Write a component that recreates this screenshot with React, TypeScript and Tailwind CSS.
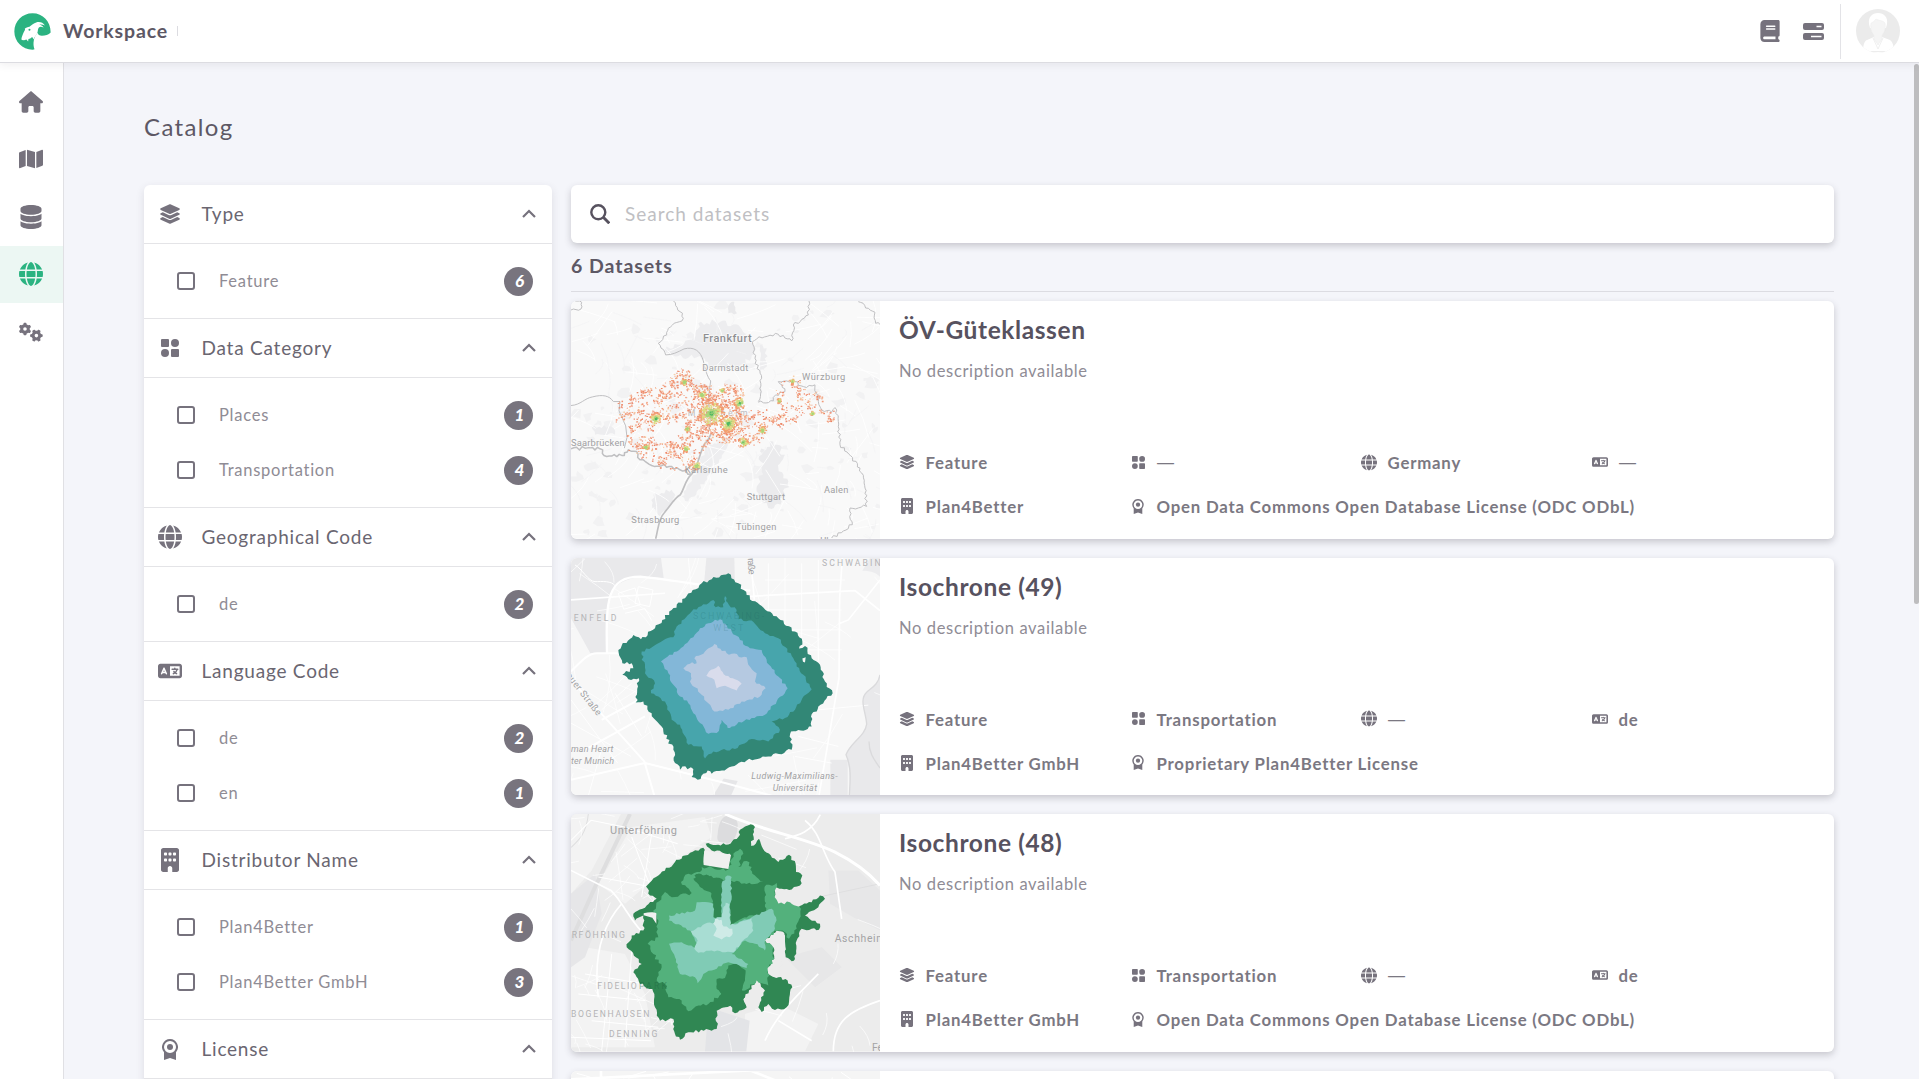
import type { ComponentType, ReactNode } from "react";
import { FaBook, FaBuilding, FaDatabase, FaGears, FaGlobe, FaHouse, FaLanguage, FaLayerGroup, FaMap } from "react-icons/fa6";

type IconProps = { className?: string };
type Pt = [number, number];

/* ---------- icons ---------- */

const CategoryIcon = ({ className }: IconProps) => (
  <svg viewBox="0 0 18 18" className={className} fill="currentColor">
    <rect width="8" height="8" rx="1" />
    <circle cx="14" cy="4" r="4" />
    <circle cx="4" cy="14" r="4" />
    <rect x="10" y="10" width="8" height="8" rx="1" />
  </svg>
);

const LicenseIcon = ({ className }: IconProps) => (
  <svg viewBox="0 0 16 21" className={className} fill="currentColor">
    <path
      fillRule="evenodd"
      d="M8 0a8 8 0 0 1 6 13.2V21l-6-2-6 2v-7.800A8 8 0 0 1 8 0Zm0 2a6 6 0 1 0 0 12A6 6 0 0 0 8 2Z"
    />
    <circle cx="8" cy="8" r="3" />
  </svg>
);

const ServerIcon = ({ className }: IconProps) => (
  <svg viewBox="0 0 21 17" className={className}>
    <rect width="21" height="7" rx="2" fill="currentColor" />
    <rect y="10" width="21" height="7" rx="2" fill="currentColor" />
    <path d="M13.500 3.500h5M8 13.500h10.500" stroke="#fff" strokeWidth="1.500" />
  </svg>
);

const SearchIcon = ({ className }: IconProps) => (
  <svg viewBox="0 0 20 20" className={className} fill="none" stroke="currentColor" strokeWidth="2.400">
    <circle cx="8.300" cy="8.300" r="7" />
    <path d="m13.300 13.300 6 6" strokeWidth="2.900" />
  </svg>
);

const ChevronUp = ({ className }: IconProps) => (
  <svg viewBox="0 0 14 9" className={className} fill="none" stroke="currentColor" strokeWidth="2.200">
    <path d="M1 8 7 2l6 6" />
  </svg>
);

const Logo = ({ className }: IconProps) => (
  <svg viewBox="44 38 110 110" className={className}>
    <path
      fill="#2bb381"
      d="M99 39C69 39 45 63 45 93s24 54 54 54c3 0 5 0 6-1-3-8-4-17-2-27 1-7 4-13 11-22 1 5 6 9 13 9 10 0 20-4 26-10C153 63 130 39 99 39Z"
    />
    <path
      fill="#fff"
      d="M67 118c-2-3 0-8 2-13 3-7 5-12 8-17l-1-3c3-4 9-5 14-6 6-5 13-11 20-13 10-3 20 0 26 9-6-3-12-4-17-2 6 1 11 4 13 8-6-3-11-3-14 0-4 4-2 10-5 17-4 8-9 12-11 19-1-3-2-6-4-8-4 4-7 5-11 6l-1 8-5-6-7 2Z"
    />
    <circle cx="90" cy="88" r="3" fill="#2bb381" />
  </svg>
);

const Avatar = ({ className }: IconProps) => (
  <svg viewBox="0 0 44 44" className={className}>
    <clipPath id="avatar-clip">
      <circle cx="22" cy="22" r="22" />
    </clipPath>
    <g clipPath="url(#avatar-clip)">
      <rect width="44" height="44" fill="#ebebeb" />
      <path d="M7 44c0-7 1-12 4-13l7-3h8l8 3c3 2 4 7 4 13Z" fill="#fff" />
      <path d="M13 15c-1-7 3-11 9-11s10 4 9 11l-1 4H14Z" fill="#fff" />
      <path d="M15 14c3-1 4-3 5-4 3 2 7 1 9 4 1 6-1 10-3 12v4l-4 6-4-6v-4c-2-2-4-6-3-12Z" fill="#f5f5f5" stroke="#ededed" strokeWidth=".500" />
      <path d="m17 29 5 11 5-11" fill="none" stroke="#e9e9e9" strokeWidth=".700" />
      <path d="M15 42.500h14" stroke="#ededed" />
    </g>
  </svg>
);

/* ---------- map drawing helpers ---------- */

function makeRandom(seed: number) {
  let s = seed;
  return () => {
    s = (s * 1664525 + 1013904223) % 4294967296;
    return s / 4294967296;
  };
}

const parse = (text: string): Pt[] => text.trim().split(/\s+/).map((p) => p.split(",").map(Number) as Pt);

/* Splits every edge into short steps and shifts them sideways, which gives ragged catchment borders. */
function ragged(text: string, amp: number, seed: number, closed = true) {
  const pts = parse(text);
  const rnd = makeRandom(seed);
  const out: string[] = [];
  const n = closed ? pts.length : pts.length - 1;
  for (let i = 0; i < n; i++) {
    const [x1, y1] = pts[i];
    const [x2, y2] = pts[(i + 1) % pts.length];
    const len = Math.hypot(x2 - x1, y2 - y1);
    const steps = Math.max(1, Math.round(len / 8));
    for (let k = 0; k < steps; k++) {
      const t = k / steps;
      const off = k === 0 ? 0 : (rnd() - 0.5) * 2 * amp;
      const x = x1 + (x2 - x1) * t - ((y2 - y1) / len) * off;
      const y = y1 + (y2 - y1) * t + ((x2 - x1) / len) * off;
      out.push(`${x.toFixed(1)},${y.toFixed(1)}`);
    }
  }
  if (!closed) out.push(pts[pts.length - 1].join(","));
  return out.join(" ");
}

function inside(x: number, y: number, poly: Pt[]) {
  let hit = false;
  for (let i = 0, j = poly.length - 1; i < poly.length; j = i++) {
    const [xi, yi] = poly[i];
    const [xj, yj] = poly[j];
    if (yi > y !== yj > y && x < ((xj - xi) * (y - yi)) / (yj - yi) + xi) hit = !hit;
  }
  return hit;
}

function Rough({ p, fill, amp = 4, seed = 7 }: { p: string; fill: string; amp?: number; seed?: number }) {
  return <polygon points={ragged(p, amp, seed)} fill={fill} />;
}

const regions = [
  "165,320 235,285 315,265 318,235 360,208 378,250 430,255 440,300 455,270 495,260 532,290 535,345 570,350 635,338 625,300 645,280 632,255 680,243 710,270 760,295 775,340 812,370 795,390 735,370 660,395 600,400 598,430 530,460 460,430 435,410 410,480 380,535 320,520 250,505 218,470 175,450 195,400 155,375",
].map(parse);

const hotspots: [number, number, number][] = [
  [437, 355, 30], [488, 385, 20], [522, 323, 14], [270, 370, 14], [392, 512, 9], [533, 440, 12], [365, 400, 7], [240, 455, 8],
  [410, 298, 10], [590, 404, 9], [740, 355, 6], [355, 260, 8], [470, 285, 6], [360, 460, 8], [640, 315, 5], [680, 258, 6],
];

function transitCells() {
  const rnd = makeRandom(41);
  const cells: { x: number; y: number; w: number; h: number; c: string }[] = [];
  const seeds: Pt[] = [];
  while (seeds.length < 400) {
    const x = 150 + rnd() * 665;
    const y = 205 + rnd() * 335;
    if (!inside(x, y, regions[0])) continue;
    if (Math.hypot((x - 300) / 1.500, y - 415) < 30 || Math.hypot(x - 345, y - 385) < 22) continue;
    if (x > 560 && rnd() < 0.35) continue;
    seeds.push([x, y]);
  }
  while (seeds.length < 460) {
    seeds.push([400 + rnd() * 130, 275 + rnd() * 165]);
  }
  const warm = ["#f0896a", "#ee9272", "#f4a88a", "#ea8262", "#f7c79c", "#f19a78"];
  for (const [sx, sy] of seeds) {
    const n = 2 + Math.floor(rnd() * 6);
    for (let i = 0; i < n; i++) {
      cells.push({
        x: sx + (rnd() - 0.5) * 20,
        y: sy + (rnd() - 0.5) * 18,
        w: 2.200 + rnd() * 3.500,
        h: 2.200 + rnd() * 2.500,
        c: warm[Math.floor(rnd() * warm.length)],
      });
    }
  }
  for (const [hx, hy, r] of hotspots) {
    const n = Math.round(r * (r > 18 ? 8 : 4.500));
    for (let i = 0; i < n; i++) {
      const a = rnd() * Math.PI * 2;
      const d = rnd() * r * 1.250;
      const q = d / r + rnd() * 0.3;
      const c = q < 0.3 && r > 10 ? "#4db763" : q < 0.7 ? "#a9d57a" : q < 1.100 ? "#dfdc86" : "#f2a06f";
      cells.push({ x: hx + Math.cos(a) * d, y: hy + Math.sin(a) * d, w: 3 + rnd() * 4, h: 3 + rnd() * 3, c });
    }
  }
  return cells;
}

const cells = transitCells();

/* faint line work for the base map */
function webLines(seed: number, count: number, w: number, h: number, len: number) {
  const rnd = makeRandom(seed);
  const d: string[] = [];
  for (let i = 0; i < count; i++) {
    const x = rnd() * w;
    const y = rnd() * h;
    const a = rnd() * Math.PI;
    const l = len * (0.4 + rnd());
    d.push(
      `M${x.toFixed(0)} ${y.toFixed(0)}q${(Math.cos(a) * l * 0.5 + rnd() * 20).toFixed(0)} ${(Math.sin(a) * l * 0.5).toFixed(0)} ${(Math.cos(a) * l).toFixed(0)} ${(Math.sin(a) * l).toFixed(0)}`,
    );
  }
  return d.join("");
}

function patches(seed: number, count: number) {
  const rnd = makeRandom(seed);
  return Array.from({ length: count }, () => {
    const x = 20 + rnd() * 920;
    const y = 20 + rnd() * 700;
    const r = 4 + rnd() * 14;
    return Array.from({ length: 7 }, (_, k) => {
      const a = (k / 7) * Math.PI * 2;
      const d = r * (0.4 + rnd());
      return `${(x + Math.cos(a) * d * 1.300).toFixed(0)},${(y + Math.sin(a) * d).toFixed(0)}`;
    }).join(" ");
  });
}

const border = { fill: "none", stroke: "#bfbfc1", strokeWidth: 3, strokeLinejoin: "round" as const };

function GermanyMap() {
  return (
    <svg viewBox="18 18 927 714" preserveAspectRatio="none" className="h-full w-full font-[Roboto]">
      <rect x="18" y="18" width="927" height="714" fill="#f9f9f9" />
      {patches(5, 110).map((p) => (
        <polygon key={p} points={p} fill="#f2f2f3" />
      ))}
      <g>
        <Rough p="400,85 450,80 520,90 560,130 570,180 520,215 440,230 420,190 330,185 300,165 385,130" fill="#ededef" amp={8} />
        <Rough p="495,25 508,20 516,55 490,55" fill="#e9e9eb" />
        <Rough p="585,470 625,440 660,480 640,520 670,560 650,620 610,640 575,590 590,530" fill="#ebebed" amp={9} />
        <Rough p="425,450 500,430 470,490 420,560 370,620 350,605 395,530" fill="#eeeef0" amp={6} />
        <Rough p="265,600 320,585 330,620 285,665 262,640" fill="#ececee" amp={6} />
        <Rough p="585,150 605,160 600,230 585,225" fill="#ededef" amp={5} />
        <Rough p="80,395 140,395 150,420 90,420" fill="#ededef" amp={5} />
      </g>
      <path d={webLines(11, 190, 945, 732, 90)} fill="none" stroke="#ffffff" strokeWidth="2.500" />
      <path d={webLines(31, 80, 945, 732, 70)} fill="none" stroke="#f3f3f4" strokeWidth="2" />
      <g {...border}>
        <polyline points={ragged("18,45 48,42 50,22 30,18", 4, 3, false)} />
        <polyline points={ragged("325,18 345,50 355,70 310,100 305,120 280,145 302,180", 5, 4, false)} />
        <path d="M302 180c20 0 35-8 55-18 30-8 50 6 58 36 4 20 12 50 22 60l-8 60 8 40-4 50" />
        <polyline points={ragged("732,18 730,60 685,90 680,138 640,118 575,132 562,140 570,190 590,250 580,320", 5, 5, false)} />
        <polyline points={ragged("580,322 625,318 632,300 660,290 640,260 690,260 715,275 750,270 760,320 778,350 800,352 810,338 820,380 825,450 885,520 900,580 905,635 855,640 862,690 800,730", 5, 6, false)} />
        <polyline points={ragged("880,20 910,40 930,52 932,85 945,88", 4, 8, false)} />
        <path d="M18 332c30-2 40-22 65-26 30-8 50-4 62 14h20l-3 28 20 45 4 35-8 32" />
        <polyline points={ragged("18,462 60,460 105,462 125,485 178,482 190,465 215,470 225,495 260,512 320,515 345,525 378,538", 5, 9, false)} strokeWidth="4.500" />
        <path d="M272 732c8-30 8-60 26-78 20-24 30-44 48-54 14-22 14-44 34-62 20-20 24-70 40-92 12-10 12-20 18-28" strokeWidth="5" />
      </g>
      <text x="368" y="364" fontSize="26" textLength="180" fill="#bdbdbf">Mannheim</text>
      {cells.map((c, i) => (
        <rect key={i} x={c.x} y={c.y} width={c.w} height={c.h} fill={c.c} />
      ))}
      <g fill="#a0a0a2" fontSize="28" stroke="#fafafa" strokeWidth="4" paintOrder="stroke">
        <text x="414" y="142" fontSize="33" fontWeight="500" fill="#8f8f92" textLength="146">Frankfurt</text>
        <text x="412" y="227" textLength="138">Darmstadt</text>
        <text x="711" y="256" textLength="130">Würzburg</text>
        <text x="18" y="455" textLength="161" strokeWidth="0">Saarbrücken</text>
        <text x="359" y="535" textLength="129" strokeWidth="0">Karlsruhe</text>
        <text x="545" y="615" textLength="115" strokeWidth="0">Stuttgart</text>
        <text x="777" y="596" textLength="73">Aalen</text>
        <text x="199" y="685" textLength="144" strokeWidth="0">Strasbourg</text>
        <text x="513" y="706" textLength="121">Tübingen</text>
        <text x="766" y="748">Ulm</text>
      </g>
    </svg>
  );
}

function MunichMap() {
  return (
    <svg viewBox="18 24 927 714" preserveAspectRatio="none" className="h-full w-full font-[Roboto]">
      <rect x="18" y="24" width="927" height="714" fill="#f7f7f7" />
      <path d="M18 24h270l8 60c-60-6-110-4-140 24-22 22-30 60-32 202H76L18 205Z" fill="#e9e9eb" />
      <path d="M424 24h84l2 90h-94Z" fill="#e9e9eb" />
      <path d="M892 62c20 0 40 4 53 18v-56h-30Z" fill="#ececee" />
      <path d="M945 375c-6 30-24 38-40 52-24 22-2 60 0 96-4 36-50 56-62 92 10 30 14 80 10 123h92ZM796 630h52v108h-52Z" fill="#e9e9eb" />
      <path d="m476 686 42 8-20 44h-54Z" fill="#e6e6e8" />
      <g fill="none" stroke="#fff" strokeWidth="3">
        <path d={webLines(71, 60, 945, 738, 150)} strokeWidth="2" />
        <path d="M18 150 300 130M540 140l330-18 75 60M560 60l8 90M832 24l-8 120-2 240-60 354M945 90l-95 120-30 12" strokeWidth="5" />
        <path d="M18 365c30-30 50-55 78-55h150M18 390l220 245 30 103M240 640l240 60 140 38M240 640 18 690M110 510l130-70M60 600l90-50 90-50" strokeWidth="6" />
        <path d="M126 310c-4-160 0-230 100-230 100 10 200 30 330 42" strokeWidth="7" />
        <path d="M610 40v200M660 24v260M710 40v250M760 30v300M600 90h240M600 180h230M640 240h190M720 300h110M700 560l120 30M690 620l110 20M760 480l150-14" strokeWidth="2.500" />
        <path d="M160 130l50-16 16 50-50 14ZM220 110l44 10-10 50-44-10ZM180 190l60-14 20 36M30 45c20 10 40 50 60 50s50-4 62 14" />
        <path d="M18 450l140 190M18 520l180 100M150 430l80 130M200 400l-90 80M70 738l40-140M370 24l8 90" strokeWidth="2.500" />
      </g>
      <path d="M945 375c-6 30-24 38-40 52-24 22-2 60 0 96-4 36-50 56-62 92 18 40 12 80 10 123M912 575c0 40 20 60 33 80" fill="none" stroke="#dadadc" strokeWidth="4" />
      <Rough
        fill="#328776"
        amp={5}
        p="490,70 520,100 545,135 590,168 640,205 690,245 712,275 702,296 720,288 740,325 765,345 780,395 803,430 760,470 738,500 740,530 715,543 678,545 680,600 610,620 545,632 500,650 440,672 428,662 398,690 380,682 385,658 352,650 345,660 330,640 325,600 295,545 260,490 235,455 212,458 222,385 190,388 172,375 205,355 200,340 172,340 160,300 205,255 228,268 270,235 320,180 360,145 410,100 440,88"
      />
      <path d="m712 326 10-4-2 16-6-2Z" fill="#f7f7f7" />
      <Rough
        fill="#47a5ac"
        amp={4}
        p="480,138 492,165 515,180 520,208 560,212 600,250 640,265 685,325 695,350 715,375 740,418 712,445 690,480 660,505 620,515 645,540 610,575 560,568 510,598 445,605 420,626 410,590 370,585 345,525 320,510 300,455 258,430 270,400 240,370 230,305 280,280 325,262 335,230 380,185 445,150 452,172 475,172"
      />
      <Rough
        fill="#83b7d8"
        amp={4}
        p="465,208 482,222 500,245 525,270 555,295 590,300 612,345 640,380 668,415 635,455 600,495 560,505 500,530 488,535 470,510 455,550 430,552 405,520 385,490 370,460 345,440 325,405 310,370 288,335 355,290 385,262 405,235 430,220"
      />
      <Rough
        fill="#b5c9e1"
        amp={4}
        p="448,282 485,310 545,322 550,345 575,370 570,395 602,415 585,440 530,455 490,480 448,485 430,460 405,430 375,395 378,370 355,355 375,342 395,340 388,325 420,305"
      />
      <Rough fill="#d9dcec" amp={2} p="460,348 482,378 510,388 530,402 515,422 480,408 455,415 448,390 424,378 432,365" />
      <g fill="#125c60" fillOpacity=".18" fontSize="27">
        <text x="384" y="208" textLength="214">SCHWABING-</text>
        <text x="445" y="243" textLength="90">WEST</text>
      </g>
      <g fill="#b4b4b6" fontSize="26">
        <text x="771" y="47" textLength="200">SCHWABING</text>
        <text x="26" y="214" textLength="128">ENFELD</text>
      </g>
      <g fill="#a2a2a4" fontSize="28">
        <text transform="translate(548 25) rotate(86)" textLength="49">raße</text>
        <text transform="translate(2 378) rotate(52)" textLength="154">auer Straße</text>
        <g fontStyle="italic" fontSize="27">
          <text x="18" y="607" textLength="127">man Heart</text>
          <text x="18" y="643" textLength="129">ter Munich</text>
          <text x="559" y="687" textLength="259">Ludwig-Maximilians-</text>
          <text x="623" y="723" textLength="133">Universität</text>
        </g>
      </g>
    </svg>
  );
}

function FoehringMap() {
  return (
    <svg viewBox="18 21 927 712" preserveAspectRatio="none" className="h-full w-full font-[Roboto]">
      <rect x="18" y="21" width="927" height="712" fill="#ececec" />
      <path d="M18 21h150L80 190l-62 70ZM200 60l220-30 20 60-120 80-140 120-80-60ZM60 420l120 20 60 120 30 160H18V480ZM540 620l100-30 120 60-40 82H540Z" fill="#f3f3f3" />
      <path d="M18 260 90 200l20 120-50 130-42 30Z" fill="#e6e6e8" />
      <path d="M484 27c20-4 36 10 34 30 0 24-10 50-36 54-22-4-28-10-24-30 2-20 6-48 26-54Z" fill="#dcdcde" />
      <path d="m430 600 124 40-10 92H420Z" fill="#e3e4e7" />
      <path d="m790 190 90 0 65 60v120l-80-40-70-40ZM660 450l110-30 60 60-80 60Z" fill="#e7e7e8" />
      <g fill="none" stroke="#dededf">
        <path d="M195 21 90 240 18 400" strokeWidth="12" />
        <path d="M70 21c-6 60-30 80-52 100M760 270l185-40" strokeWidth="3" />
      </g>
      <g fill="none" stroke="#fff">
        <path d={webLines(91, 80, 500, 733, 80)} strokeWidth="2" />
        <path d={webLines(17, 30, 945, 733, 130)} strokeWidth="2" />
        <path d="M480 21c110 50 240 70 330 114 60 30 100 60 135 100" strokeWidth="9" />
        <path d="M660 95c40-10 80-20 106-72M720 40c50 40 50 100 90 155l20 140M18 190l120 60c40 40 60 100 110 140M170 290c-80 90-80 200-70 280M945 580c-90 30-140 60-140 152M600 700c30-70 90-130 160-200M640 640l100 60" strokeWidth="5" />
        <path d="M18 100l60-60 100 20 160 50M100 210l160 30M200 90l60 160M260 80l-30 190M60 500l180 30M40 560l200 20M80 640l200 20M18 690l240 10M140 440l-30 290M200 430l-20 290" strokeWidth="3" />
      </g>
      <Rough
        fill="#308753"
        amp={4}
        p="557,52 570,60 566,90 552,125 582,95 594,125 640,165 672,143 692,170 693,195 712,205 705,235 680,247 650,245 630,240 628,270 640,290 690,300 740,285 765,265 780,275 760,300 720,325 765,350 762,368 710,365 695,400 690,455 680,462 662,450 660,385 635,370 600,400 625,420 628,455 612,480 610,500 640,510 668,520 682,540 665,600 630,608 610,590 590,614 580,600 600,550 575,518 535,575 545,600 510,618 495,595 455,610 455,665 370,675 345,697 330,680 325,635 285,640 270,600 262,545 225,530 205,495 230,470 185,420 200,385 235,370 235,325 210,340 205,320 245,295 275,275 255,265 243,238 280,205 330,165 360,145 415,122 418,145 497,145 495,140 440,130 422,110 490,112 520,90 525,68"
      />
      <Rough
        fill="#53b17c"
        amp={5}
        p="525,125 535,140 520,180 545,162 560,180 562,200 595,225 560,232 500,222 470,215 400,200 385,215 405,240 440,258 445,285 500,260 520,330 600,320 598,240 635,228 628,270 640,290 675,285 708,305 695,365 672,395 660,375 635,370 600,400 625,420 628,455 612,480 610,535 575,518 540,550 520,550 455,520 470,560 430,590 400,595 370,612 350,580 310,570 300,530 275,520 290,480 265,440 248,410 280,390 275,325 265,310 300,255 330,270 380,258 348,225 370,200 405,195 410,180 490,187 505,140"
      />
      <path d="M418 130c-2 16-4 30-2 44l74 12c2-14 6-28 8-42Z" fill="#f0f0f0" />
      <path d="M496 225c36 8 74 8 102 8l2 72c-30 8-66 26-102 48l-4-60Z" fill="#308753" />
      <Rough fill="#308753" amp={3} p="388,205 405,200 470,217 470,330 445,330 445,295 440,258 405,238" />
      <Rough fill="#308753" amp={2} p="455,515 480,512 490,475 520,470 542,490 540,520 530,550 540,570 515,590 480,600 440,600 470,560 455,545" />
      <Rough
        fill="#80cbb5"
        amp={3}
        p="487,205 500,210 497,285 495,355 560,330 620,305 633,330 630,365 600,400 600,430 570,410 540,400 500,440 550,470 545,482 490,465 440,490 415,500 398,528 390,510 345,500 330,450 312,410 350,405 400,425 390,400 375,370 312,340 312,325 390,310 395,285 445,290 445,330 470,335 470,230"
      />
      <Rough
        fill="#a8ddd3"
        amp={3}
        p="482,287 494,292 495,355 560,333 565,370 540,395 505,435 440,430 400,437 388,425 398,400 378,372 420,350 450,345 455,330 470,330"
      />
      <Rough fill="#cfebe7" amp={3} p="450,335 470,338 476,358 502,365 500,385 470,397 445,385 455,365 445,350" />
      <path d="M236 318c16-4 30-4 38 0v32l-12-18-26-8Z" fill="#f0f0f0" />
      <path d="M630 378c12-8 24-8 28 0l4 50-18 12 8 30-12 12 4 20-8 10c-16-6-30-12-28-30l22-20-2-46-22-14Z" fill="#ececec" />
      <g fill="#a3a3a5" fontSize="33">
        <text x="135" y="81" textLength="201">Unterföhring</text>
        <text x="809" y="404" fontSize="31" textLength="152">Aschheim</text>
        <text x="921" y="730" fontSize="31">Feld</text>
      </g>
      <g fill="#b3b3b5" fontSize="26">
        <text x="20" y="393" textLength="160">RFÖHRING</text>
        <text x="97" y="545" textLength="118">FIDELIO</text>
        <text x="222" y="545" textLength="84" fill="#1f6b43" fillOpacity=".5">PARK</text>
        <text x="18" y="629" textLength="235">BOGENHAUSEN</text>
        <text x="132" y="690" textLength="145">DENNING</text>
      </g>
    </svg>
  );
}

function StreetStrip() {
  return (
    <svg viewBox="18 0 927 714" preserveAspectRatio="none" className="h-full w-full">
      <rect x="18" width="927" height="714" fill="#f5f5f5" />
      <path d={webLines(23, 200, 945, 714, 100)} fill="none" stroke="#fff" strokeWidth="3" />
      <path d="M108 0v700M18 25l600-30M560 0l100 40" fill="none" stroke="#fff" strokeWidth="8" />
    </svg>
  );
}

/* ---------- shell ---------- */

const navItems: { Icon: ComponentType<IconProps>; active?: boolean }[] = [
  { Icon: FaHouse },
  { Icon: FaMap },
  { Icon: FaDatabase },
  { Icon: FaGlobe, active: true },
  { Icon: FaGears },
];

function Header() {
  return (
    <header className="relative z-20 flex h-[63px] shrink-0 items-center border-b border-[#dcdce1] bg-white pl-[14px] shadow-[0_2px_8px_rgba(58,53,65,0.08)]">
      <Logo className="size-[37px]" />
      <span className="ml-3 w-[104px] text-[19.500px] leading-6 font-bold tracking-[0.850px] whitespace-nowrap text-[#5d5865]">Workspace</span>
      <span className="ml-[10px] h-[10px] w-px bg-[#dcdce1]" />
      <div className="ml-auto flex h-full items-center pr-[19px] text-[#76727d]">
        <FaBook className="h-[22px] w-5" />
        <ServerIcon className="ml-[23px] h-[17px] w-[21px]" />
        <span className="ml-4 h-[55px] w-px bg-[#e3e3e7]" />
        <Avatar className="ml-[15px] size-11" />
      </div>
    </header>
  );
}

function Sidebar() {
  return (
    <nav className="w-16 shrink-0 border-r border-[#e0e0e4] bg-white pt-[10px]">
      {navItems.map(({ Icon, active }, i) => (
        <div
          key={i}
          className={
            active
              ? "mb-[0.500px] flex h-[57px] items-center justify-center bg-[#ecf7f3] pr-px text-[#2bb381]"
              : "mb-[0.500px] flex h-[57px] items-center justify-center pr-px text-[#76727d]"
          }
        >
          <Icon className="size-6" />
        </div>
      ))}
    </nav>
  );
}

/* ---------- filters ---------- */

type Section = { title: string; icon: ReactNode; items: { label: string; count: number }[]; body: string };

const sections: Section[] = [
  { title: "Type", icon: <FaLayerGroup className="size-[22px]" />, items: [{ label: "Feature", count: 6 }], body: "h-[75px]" },
  {
    title: "Data Category",
    icon: <CategoryIcon className="size-[18px]" />,
    items: [{ label: "Places", count: 1 }, { label: "Transportation", count: 4 }],
    body: "h-[130px]",
  },
  { title: "Geographical Code", icon: <FaGlobe className="size-6" />, items: [{ label: "de", count: 2 }], body: "h-[75px]" },
  {
    title: "Language Code",
    icon: <FaLanguage className="size-6" />,
    items: [{ label: "de", count: 2 }, { label: "en", count: 1 }],
    body: "h-[130px]",
  },
  {
    title: "Distributor Name",
    icon: <FaBuilding className="size-6" />,
    items: [{ label: "Plan4Better", count: 1 }, { label: "Plan4Better GmbH", count: 3 }],
    body: "h-[130px]",
  },
  { title: "License", icon: <LicenseIcon className="h-[21px] w-4" />, items: [], body: "h-[130px]" },
];

function Filters() {
  return (
    <aside className="w-[408px] shrink-0 self-start rounded-md bg-white shadow-[0_3px_9px_rgba(58,53,65,0.12)]">
      {sections.map((s) => (
        <section key={s.title}>
          <div className="flex h-[59px] items-center border-b border-[#e4e4e7] pr-[16px] pl-[14px] text-[#76727d]">
            <span className="flex w-6 justify-center">{s.icon}</span>
            <h3 className="ml-[19.500px] text-[19px] leading-6 tracking-[0.780px] text-[#6a6671]">{s.title}</h3>
            <ChevronUp className="mb-px ml-auto h-[9px] w-[14px]" />
          </div>
          <div className={`${s.body} flex flex-col border-b border-[#e4e4e7] pt-[9.500px]`}>
            {s.items.map((it) => (
              <div key={it.label} className="flex h-[55px] items-center pr-[19px] pl-[33px]">
                <span className="size-[18px] rounded-[3px] border-2 border-[#76727d]" />
                <span className="ml-[24px] text-[16.500px] leading-6 tracking-[0.750px] text-[#8f8c95]">{it.label}</span>
                <span className="ml-auto flex size-[29px] items-center justify-center rounded-full bg-[#78747e] pl-0.5 text-[17px] font-black text-white italic">
                  {it.count}
                </span>
              </div>
            ))}
          </div>
        </section>
      ))}
    </aside>
  );
}

/* ---------- dataset cards ---------- */

type Dataset = {
  title: string;
  map: ReactNode;
  category: string;
  region: string;
  language: string;
  distributor: string;
  license: string;
};

const odbl = "Open Data Commons Open Database License (ODC ODbL)";

const datasets: Dataset[] = [
  { title: "ÖV-Güteklassen", map: <GermanyMap />, category: "—", region: "Germany", language: "—", distributor: "Plan4Better", license: odbl },
  { title: "Isochrone (49)", map: <MunichMap />, category: "Transportation", region: "—", language: "de", distributor: "Plan4Better GmbH", license: "Proprietary Plan4Better License" },
  { title: "Isochrone (48)", map: <FoehringMap />, category: "Transportation", region: "—", language: "de", distributor: "Plan4Better GmbH", license: odbl },
  { title: "Isochrone (47)", map: <StreetStrip />, category: "Transportation", region: "—", language: "de", distributor: "Plan4Better GmbH", license: odbl },
];

function Meta({ icon, children, wide }: { icon: ReactNode; children: ReactNode; wide?: boolean }) {
  return (
    <div className={wide ? "col-span-3 flex items-center" : "flex items-center"}>
      <span className="flex w-[17px] shrink-0 justify-center pr-px pb-0.5">{icon}</span>
      {children === "—" ? (
        <span className="ml-[10px] font-['Liberation_Sans'] text-[17px] leading-6 text-[#7b7882]">—</span>
      ) : (
        <span className="ml-[9.500px] text-[16.800px] leading-6 font-bold tracking-[0.800px] whitespace-nowrap text-[#7b7882]">{children}</span>
      )}
    </div>
  );
}

function Card({ d }: { d: Dataset }) {
  return (
    <article className="mb-[19px] flex h-[237.700px] overflow-hidden rounded-md bg-white shadow-[0_3px_7px_rgba(58,53,65,0.240)]">
      <div className="w-[309px] shrink-0">{d.map}</div>
      <div className="flex flex-1 flex-col pl-[19px]">
        <h2 className="mt-[13px] text-[24.500px] leading-8 font-bold tracking-[0.600px] text-[#57525f]">{d.title}</h2>
        <p className="mt-[13px] text-[16.500px] leading-6 tracking-[0.650px] text-[#8f8c95]">No description available</p>
        <div className="mt-[68px] grid grid-cols-[231px_231px_231px_231px] gap-y-5 text-[#76727d]">
          <Meta icon={<FaLayerGroup className="size-4" />}>Feature</Meta>
          <Meta icon={<CategoryIcon className="size-[13px]" />}>{d.category}</Meta>
          <Meta icon={<FaGlobe className="size-[17px]" />}>{d.region}</Meta>
          <Meta icon={<FaLanguage className="size-4" />}>{d.language}</Meta>
          <Meta icon={<FaBuilding className="size-4" />}>{d.distributor}</Meta>
          <Meta icon={<LicenseIcon className="h-[15px] w-3" />} wide>
            {d.license}
          </Meta>
        </div>
      </div>
    </article>
  );
}

export default function App() {
  return (
    <div className="flex h-[1079px] w-[1919px] flex-col overflow-hidden bg-[#f4f5fa] font-[Lato,sans-serif]">
      <Header />
      <div className="flex min-h-0 flex-1">
        <Sidebar />
        <main className="min-w-0 flex-1 overflow-hidden pl-20">
          <h1 className="mt-[48px] text-2xl leading-8 tracking-[1.350px] text-[#5d5865]">Catalog</h1>
          <div className="mt-[42px] flex">
            <Filters />
            <div className="ml-[19px] w-[1263px]">
              <div className="flex h-[58px] items-center rounded-md bg-white pl-[19px] text-[#57525f] shadow-[0_3px_7px_rgba(58,53,65,0.240)]">
                <SearchIcon className="size-5" />
                <span className="mb-px ml-[15px] text-[19px] leading-6 tracking-[1px] text-[#c0bfc3]">Search datasets</span>
              </div>
              <div className="mb-[9px] flex h-[49px] items-center border-b border-[#dcdce2] pb-0.5">
                <h4 className="text-[19.500px] leading-6 font-bold tracking-[0.950px] text-[#5d5865]">6 Datasets</h4>
              </div>
              {datasets.map((d) => (
                <Card key={d.title} d={d} />
              ))}
            </div>
          </div>
        </main>
        <div className="w-[5px] shrink-0 pt-px">
          <div className="h-[540px] rounded-full bg-[#bdbdbf]" />
        </div>
      </div>
    </div>
  );
}
